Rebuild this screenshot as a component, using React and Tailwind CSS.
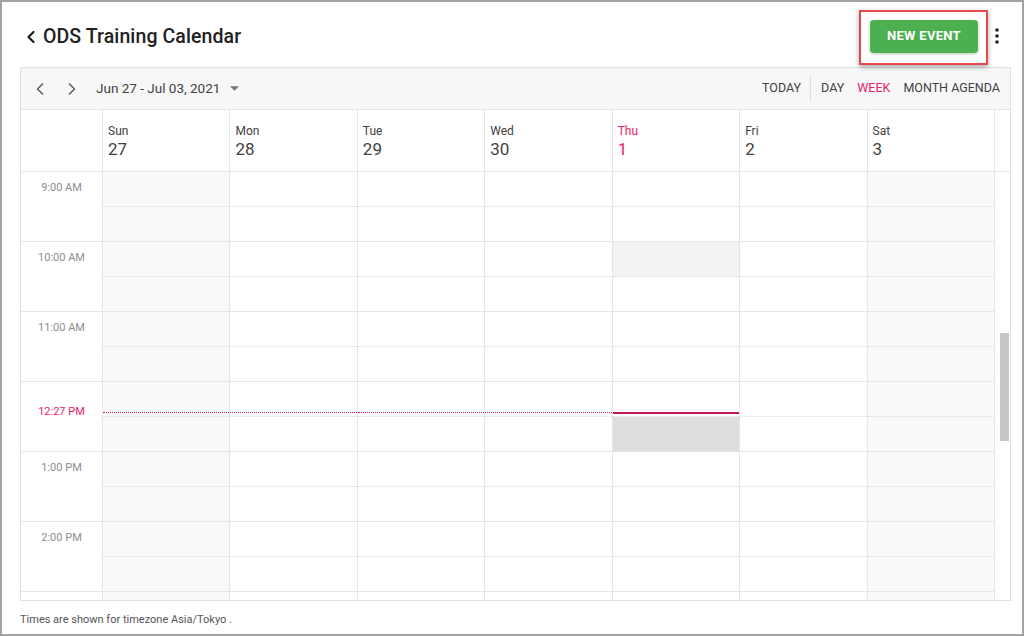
import React from 'react';

const days = [
  { name: 'Sun', date: '27', weekend: true },
  { name: 'Mon', date: '28' },
  { name: 'Tue', date: '29' },
  { name: 'Wed', date: '30' },
  { name: 'Thu', date: '1', today: true },
  { name: 'Fri', date: '2' },
  { name: 'Sat', date: '3', weekend: true },
];

// last row is only partly visible, so its label stays hidden
const hours = ['9:00 AM', '10:00 AM', '11:00 AM', '12:00 PM', '1:00 PM', '2:00 PM', ''];

const Chevron = ({ dir = 'left', className = '', stroke = 2 }) => (
  <svg viewBox="0 0 8 12" className={className} fill="none" stroke="currentColor" strokeWidth={stroke} strokeLinecap="round" strokeLinejoin="round">
    {dir === 'left' ? <path d="M6.5 1 L1.5 6 L6.5 11" /> : <path d="M1.5 1 L6.5 6 L1.5 11" />}
  </svg>
);

const DayCell = ({ day, dayIdx, hourIdx }) => {
  const isThu = dayIdx === 4;
  const topShade = isThu && hourIdx === 1 ? 'bg-[#f3f3f3]' : '';
  const bottomShade = isThu && hourIdx === 3 ? 'bg-[#dedede]' : '';
  const isNowRow = hourIdx === 3;
  return (
    <div className={`relative h-[70px] border-b border-r border-[#e6e6e6] flex flex-col ${day.weekend ? 'bg-[#f9f9f9]' : 'bg-white'}`}>
      <div className={`h-[35px] border-b border-dotted border-[#dcdcdc] ${topShade}`} />
      <div className={`flex-1 ${bottomShade}`} />
      {isNowRow && dayIdx < 4 && (
        <div className="absolute left-0 right-0 top-[30px] border-t border-dotted border-[#d81b60]" />
      )}
      {isNowRow && isThu && (
        <div className="absolute left-0 right-0 top-[30px] h-[2px] bg-[#c2185b]" />
      )}
    </div>
  );
};

export default function App() {
  return (
    <div className="w-[1024px] h-[636px] border-2 border-[#a3a3a3] bg-white font-['Roboto',sans-serif] flex flex-col overflow-hidden">
      {/* page header */}
      <div className="h-[65px] flex items-center justify-between pl-[25px] pr-[23px]">
        <div className="flex items-center gap-[8px] pt-[4px]">
          <Chevron className="w-[8px] h-[12px] text-[#212121]" stroke={2.2} />
          <span className="text-[19.5px] font-medium text-[#212121] tracking-[0.1px]">ODS Training Calendar</span>
        </div>
        <div className="flex items-center gap-[17px] pt-[3px]">
          <div className="relative">
            <div className="absolute left-[-11px] right-[-10px] top-[-10px] bottom-[-12px] border-2 border-[#e8474b] shadow-[0_2px_5px_rgba(0,0,0,0.35)]" />
            <button className="relative w-[108px] h-[33px] rounded-[4px] bg-[#4caf50] text-white text-[13px] font-bold tracking-[0.3px] shadow-[0_1px_3px_rgba(0,0,0,0.25)]">
              NEW EVENT
            </button>
          </div>
          <svg viewBox="0 0 4 16" className="w-[4px] h-[16px] text-[#212121]" fill="currentColor">
            <circle cx="2" cy="2" r="1.8" />
            <circle cx="2" cy="8" r="1.8" />
            <circle cx="2" cy="14" r="1.8" />
          </svg>
        </div>
      </div>

      {/* calendar */}
      <div className="ml-[18px] w-[991px] border border-[#e0e0e0] flex flex-col">
        {/* toolbar */}
        <div className="h-[42px] bg-[#f7f7f7] border-b border-[#e6e6e6] flex items-center justify-between pl-[15px] pr-[10px]">
          <div className="flex items-center">
            <Chevron className="w-[8px] h-[12px] text-[#616161]" stroke={1.6} />
            <Chevron dir="right" className="w-[8px] h-[12px] text-[#616161] ml-[24px]" stroke={1.6} />
            <span className="ml-[20px] text-[13.5px] text-[#424242]">Jun 27 - Jul 03, 2021</span>
            <svg viewBox="0 0 10 5" className="w-[9px] h-[5px] ml-[10px] text-[#757575]" fill="currentColor">
              <path d="M0 0 L10 0 L5 5 Z" />
            </svg>
          </div>
          <div className="flex items-center text-[12.5px] text-[#424242]">
            <span>TODAY</span>
            <div className="w-px h-[26px] bg-[#dcdcdc] ml-[9px] mr-[10px]" />
            <span>DAY</span>
            <span className="ml-[13px] text-[#e91e63]">WEEK</span>
            <span className="ml-[13px]">MONTH AGENDA</span>
          </div>
        </div>

        {/* day header */}
        <div className="flex border-b border-[#e6e6e6]">
          <div className="w-[974px] grid grid-cols-[82px_repeat(7,minmax(0,1fr))]">
            <div className="h-[61px] border-r border-[#e6e6e6]" />
            {days.map((d) => (
              <div key={d.name} className={`h-[61px] border-r border-[#e6e6e6] pl-[5px] pt-[15px] leading-none ${d.today ? 'text-[#e91e63]' : 'text-[#424242]'}`}>
                <div className="text-[12px]">{d.name}</div>
                <div className="text-[17px] mt-[4px]">{d.date}</div>
              </div>
            ))}
          </div>
          <div className="flex-1" />
        </div>

        {/* body */}
        <div className="h-[428px] flex overflow-hidden">
          <div className="w-[974px] grid grid-cols-[82px_repeat(7,minmax(0,1fr))] content-start">
            {hours.map((h, hi) => (
              <React.Fragment key={hi}>
                <div className={`h-[70px] border-b border-r border-[#e6e6e6] text-center text-[11px] leading-[14px] ${hi === 3 ? 'pt-[23px] text-[#e91e63]' : 'pt-[9px] text-[#8e8e8e]'}`}>
                  {hi === 3 ? '12:27 PM' : h}
                </div>
                {days.map((d, di) => (
                  <DayCell key={d.name} day={d} dayIdx={di} hourIdx={hi} />
                ))}
              </React.Fragment>
            ))}
          </div>
          <div className="flex-1 bg-white pl-[5px] pt-[161px]">
            <div className="w-[9px] h-[108px] bg-[#c6c6c6]" />
          </div>
        </div>
      </div>

      {/* footer */}
      <div className="pl-[18px] pt-[12px] text-[11px] leading-[14px] text-[#555555]">
        Times are shown for timezone Asia/Tokyo .
      </div>
    </div>
  );
}
